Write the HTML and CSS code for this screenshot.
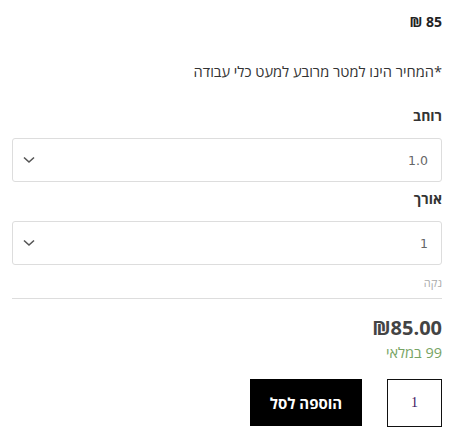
FILE: index.html
```html
<!DOCTYPE html>
<html lang="he" dir="rtl">
<head>
<meta charset="utf-8">
<link rel="stylesheet" href="styles.css">
</head>
<body>
<div class="product">
  <p class="price-top">85 ₪</p>
  <p class="note">*המחיר הינו למטר מרובע למעט כלי עבודה</p>
  <div class="field">
    <label class="label">רוחב</label>
    <div class="select"><span class="value">1.0</span>
      <svg class="chev" width="12" height="8" viewBox="0 0 12 8"><path d="M1 1.5 L6 6 L11 1.5" fill="none" stroke="#555" stroke-width="1.6"/></svg>
    </div>
  </div>
  <div class="field">
    <label class="label">אורך</label>
    <div class="select"><span class="value">1</span>
      <svg class="chev" width="12" height="8" viewBox="0 0 12 8"><path d="M1 1.5 L6 6 L11 1.5" fill="none" stroke="#555" stroke-width="1.6"/></svg>
    </div>
  </div>
  <a class="reset">נקה</a>
  <div class="variation">
    <p class="price">₪85.00</p>
    <p class="stock">99 במלאי</p>
  </div>
  <div class="cart">
    <div class="qty">1</div>
    <button class="add">הוספה לסל</button>
  </div>
</div>
</body>
</html>
```
FILE: styles.css
```css
html, body { margin: 0; padding: 0; background: #fff; }
body { font-family: "Open Sans", "Noto Sans", sans-serif; color: #333; }
.product { width: 430px; margin-right: 32px; padding-top: 12px; }
p { margin: 0; }
.price-top { font-weight: 700; font-size: 14px; line-height: 20px; color: #222; }
.note { font-size: 14.6px; line-height: 20px; margin-top: 29px; color: #333; }
.field:first-of-type { margin-top: 25px; }
.label { display: block; font-weight: 700; font-size: 14px; line-height: 20px; color: #333; }
.field + .field .label { margin-top: 7px; }
.select { margin-top: 12px; height: 42px; border: 1px solid #ddd; border-radius: 3px; display: flex; align-items: center; justify-content: space-between; padding: 0 13px 0 10px; }
.value { font-family: "DejaVu Sans", sans-serif; font-size: 12.5px; color: #666; }
.chev { display: block; }
.reset { display: block; font-size: 11px; line-height: 16px; color: #aaa; margin-top: 10px; }
.variation { border-top: 1px solid #ddd; margin-top: 7px; padding-top: 16px; }
.price { font-weight: 700; font-size: 20px; line-height: 26px; color: #444; }
.stock { font-size: 14.5px; line-height: 18px; color: #77a464; margin-top: 3px; }
.cart { display: flex; gap: 25px; margin-top: 17px; }
.qty { width: 53px; height: 46px; border: 1px solid #111; display: flex; align-items: center; justify-content: center; font-family: "Liberation Serif", serif; font-size: 14px; color: #3c1361; }
.add { width: 112px; height: 47px; background: #000; color: #fff; border: 0; font-family: "Open Sans", sans-serif; font-weight: 700; font-size: 15px; padding: 0; }
```
